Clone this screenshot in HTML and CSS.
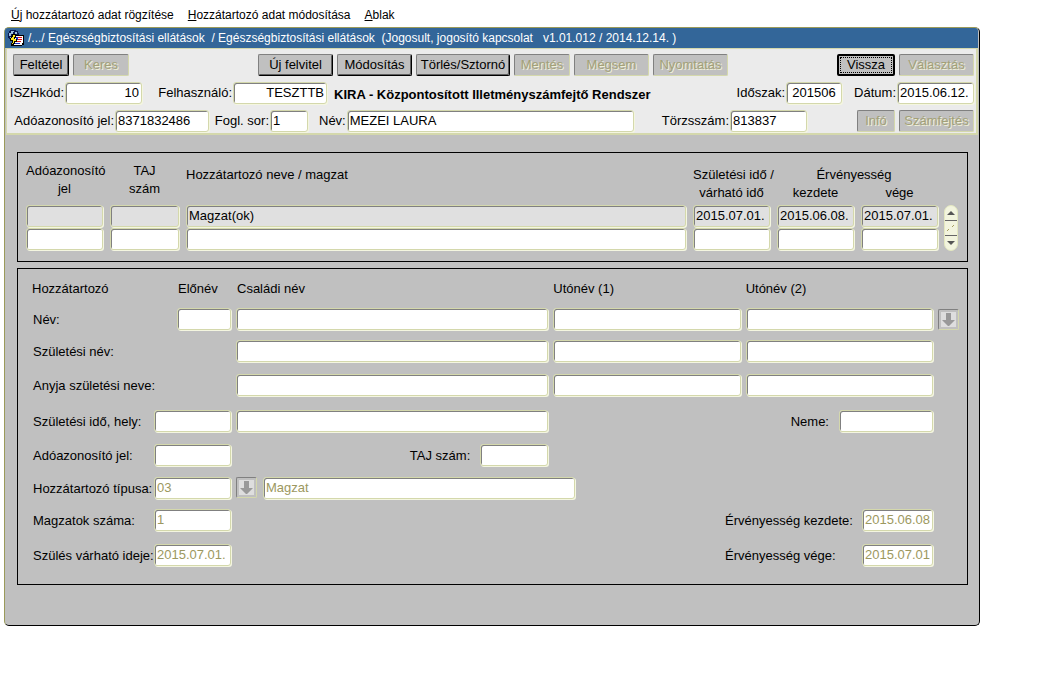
FILE: index.html
```html
<!DOCTYPE html>
<html lang="hu">
<head>
<meta charset="utf-8">
<title>KIRA - Központosított Illetményszámfejtő Rendszer</title>
<link rel="stylesheet" href="styles.css">
</head>
<body>
<nav class="menu">
  <button type="button" class="menu-item"><u>Ú</u>j hozzátartozó adat rögzítése</button>
  <button type="button" class="menu-item"><u>H</u>ozzátartozó adat módosítása</button>
  <button type="button" class="menu-item"><u>A</u>blak</button>
</nav>
<main class="window">
  <header class="titlebar">
    <svg class="app-icon" width="16" height="16" viewBox="0 0 16 16" shape-rendering="crispEdges" aria-hidden="true">
      <path fill="#0a1a50" d="M2 0h6v1h2v2h1v3H9v3H1V8H0V3h1V1h1z"/>
      <path fill="#9cc0e0" d="M3 1h3v1H5v2H3v2H1V3h2zM7 2h2v2H7zM2 7h3v1H2z"/>
      <path fill="#000" d="M5 5h11v10h-2v1H3v-3h2z"/>
      <path fill="#fff" d="M6 6h9v7h-1v2H4v-1h2z"/>
      <path fill="#e01818" d="M10 7h4v1h-4zM10 9h4v1h-4zM9 11h4v1H9z"/>
      <path fill="#1830c0" d="M8 7h2v3H8zM7 13h5v1H7z"/>
      <path fill="#000" d="M4 4h4v4H7v1h2v3H7v2H6v1H3v-2h1v-2H2V8h1V6h1z"/>
      <path fill="#ffe820" d="M5 5h2v2H6v2h2v2H6v2H5v1H4v-1h1v-3H3V8h1V7h1z"/>
    </svg>
    <span class="title">/.../ Egészségbiztosítási ellátások&nbsp; / Egészségbiztosítási ellátások&nbsp; (Jogosult, jogosító kapcsolat &nbsp; v1.01.012 / 2014.12.14. )</span>
  </header>

  <section class="toolbar">
    <div class="actions">
      <div class="group">
        <button type="button" class="btn w56">Feltétel</button>
        <button type="button" class="btn w56" disabled>Keres</button>
      </div>
      <div class="group group-main">
        <button type="button" class="btn w75">Új felvitel</button>
        <button type="button" class="btn w75">Módosítás</button>
        <button type="button" class="btn w94">Törlés/Sztornó</button>
        <button type="button" class="btn w56" disabled>Mentés</button>
        <button type="button" class="btn w75" disabled>Mégsem</button>
        <button type="button" class="btn w75" disabled>Nyomtatás</button>
      </div>
      <div class="group group-end">
        <button type="button" class="btn w56 current"><span>Vissza</span></button>
        <button type="button" class="btn w75" disabled>Választás</button>
      </div>
    </div>
    <div class="info info-session">
      <div class="field"><label for="iszh">ISZHkód:</label><input id="iszh" class="box w77 right" value="10"></div>
      <div class="field"><label for="user">Felhasználó:</label><input id="user" class="box w94 right" value="TESZTTB"></div>
      <h1 class="system">KIRA - Központosított Illetményszámfejtő Rendszer</h1>
      <div class="field"><label for="period">Időszak:</label><input id="period" class="box w56 center" value="201506"></div>
      <div class="field"><label for="date">Dátum:</label><input id="date" class="box w77" value="2015.06.12."></div>
    </div>
    <div class="info info-person">
      <div class="field"><label for="tax">Adóazonosító jel:</label><input id="tax" class="box w94" value="8371832486"></div>
      <div class="field"><label for="job">Fogl. sor:</label><input id="job" class="box w38" value="1"></div>
      <div class="field name-field"><label for="name">Név:</label><input id="name" class="box grow" value="MEZEI LAURA"></div>
      <div class="field"><label for="reg">Törzsszám:</label><input id="reg" class="box w77" value="813837"></div>
      <div class="group group-end">
        <button type="button" class="btn w38" disabled>Infó</button>
        <button type="button" class="btn w75" disabled>Számfejtés</button>
      </div>
    </div>
  </section>

  <section class="panel records">
    <table class="grid">
      <colgroup><col class="c-date"><col class="c-taj"><col><col class="c-date"><col class="c-date"><col class="c-last"></colgroup>
      <thead>
        <tr class="head-top">
          <th rowspan="2" class="top">Adóazonosító<br>jel</th>
          <th rowspan="2" class="top">TAJ<br>szám</th>
          <th rowspan="2" class="name-head">Hozzátartozó neve / magzat</th>
          <th rowspan="2">Születési idő /<br>várható idő</th>
          <th colspan="2">Érvényesség</th>
        </tr>
        <tr><th>kezdete</th><th class="last">vége</th></tr>
      </thead>
      <tbody>
        <tr class="selected">
          <td><input class="box" aria-label="Adóazonosító jel 1"></td>
          <td><input class="box" aria-label="TAJ szám 1"></td>
          <td><input class="box" aria-label="Hozzátartozó neve 1" value="Magzat(ok)"></td>
          <td><input class="box" aria-label="Születési idő 1" value="2015.07.01."></td>
          <td><input class="box" aria-label="Érvényesség kezdete 1" value="2015.06.08."></td>
          <td class="last"><input class="box" aria-label="Érvényesség vége 1" value="2015.07.01."></td>
        </tr>
        <tr>
          <td><input class="box" aria-label="Adóazonosító jel 2"></td>
          <td><input class="box" aria-label="TAJ szám 2"></td>
          <td><input class="box" aria-label="Hozzátartozó neve 2"></td>
          <td><input class="box" aria-label="Születési idő 2"></td>
          <td><input class="box" aria-label="Érvényesség kezdete 2"></td>
          <td class="last"><input class="box" aria-label="Érvényesség vége 2"></td>
        </tr>
      </tbody>
    </table>
    <div class="scroller">
      <button type="button" class="scroll-btn" aria-label="Fel"><svg width="8" height="4" viewBox="0 0 8 4"><path fill="#555" d="M4 0l4 4H0z"/></svg></button>
      <div class="thumb"><svg width="8" height="8" viewBox="0 0 8 8"><path stroke="#a8a060" d="M0 7l2-2M5 3l2-2"/></svg></div>
      <button type="button" class="scroll-btn" aria-label="Le"><svg width="8" height="4" viewBox="0 0 8 4"><path fill="#555" d="M0 0h8L4 4z"/></svg></button>
    </div>
  </section>

  <form class="panel details">
    <span>Hozzátartozó</span><span class="prefix head">Előnév</span><span class="head">Családi név</span><span>Utónév (1)</span><span>Utónév (2)</span>

    <label class="col1" for="n0">Név:</label>
    <input id="n0" class="box prefix">
    <input class="box" aria-label="Családi név">
    <input class="box" aria-label="Utónév 1">
    <input class="box" aria-label="Utónév 2">
    <button type="button" class="pick" aria-label="Név választása" disabled><svg width="15" height="15" viewBox="0 0 15 15"><path fill="#999" d="M5 1h5v7h4l-6 6H7L1 8h4z"/></svg></button>

    <label class="col1" for="b0">Születési név:</label>
    <input id="b0" class="box col3">
    <input class="box" aria-label="Születési utónév 1">
    <input class="box" aria-label="Születési utónév 2">

    <label class="col1" for="m0">Anyja születési neve:</label>
    <input id="m0" class="box col3">
    <input class="box" aria-label="Anyja utónév 1">
    <input class="box" aria-label="Anyja utónév 2">

    <label class="col1" for="bd">Születési idő, hely:</label>
    <input id="bd" class="box">
    <input class="box" aria-label="Születési hely">
    <div class="field spaced side"><label for="sex">Neme:</label><input id="sex" class="box w94"></div>

    <label class="col1" for="tx">Adóazonosító jel:</label>
    <input id="tx" class="box">
    <div class="field spaced"><label for="taj">TAJ szám:</label><input id="taj" class="box w68"></div>

    <label class="col1" for="type">Hozzátartozó típusa:</label>
    <input id="type" class="box" value="03" disabled>
    <div class="type-field">
      <button type="button" class="pick" aria-label="Típus választása" disabled><svg width="15" height="15" viewBox="0 0 15 15"><path fill="#999" d="M5 1h5v7h4l-6 6H7L1 8h4z"/></svg></button>
      <input class="box type-name" aria-label="Típus neve" value="Magzat" disabled>
    </div>

    <label class="col1" for="cnt">Magzatok száma:</label>
    <input id="cnt" class="box" value="1" disabled>
    <div class="field spaced side dates"><label for="from">Érvényesség kezdete:</label><input id="from" class="box w71" value="2015.06.08." disabled></div>

    <label class="col1" for="due">Szülés várható ideje:</label>
    <input id="due" class="box" value="2015.07.01." disabled>
    <div class="field spaced side dates"><label for="to">Érvényesség vége:</label><input id="to" class="box w71" value="2015.07.01" disabled></div>
  </form>
</main>
</body>
</html>
```

FILE: styles.css
```css
* { box-sizing: border-box; }

body {
  margin: 0;
  padding: 0 63px 0 4px;
  background: #fff;
  color: #000;
  font: 13px/18px "Liberation Sans", Arial, sans-serif;
}

button, input { font: inherit; color: inherit; margin: 0; }

.menu { display: flex; gap: 14px; padding: 6px 7px 3px; }
.menu-item { border: 0; padding: 0; background: none; font-size: 12px; white-space: nowrap; }

.window {
  background: #c0c0c0;
  border: 1px solid #000;
  border-top-color: #9a9a5a;
  border-left-color: #9a9a5a;
  border-radius: 5px;
  padding: 0 1px 34px 0;
}

.titlebar {
  display: flex;
  align-items: center;
  gap: 4px;
  height: 20px;
  padding-left: 3px;
  background: #336699;
  color: #fff;
  border-radius: 3px 3px 0 0;
  font-size: 12px;
  white-space: nowrap;
}
.app-icon { flex: none; }

.toolbar {
  margin: 0 0 17px 1px;
  padding: 5px 2px 1px 6px;
  background: #ebebeb;
  border: 1px solid #d4d8ac;
  border-width: 1px 2px 2px 1px;
}
.actions, .group { display: flex; gap: 4px; }
.group-main { margin-left: 125px; }
.group-end { margin-left: auto; }

.btn {
  flex: none;
  height: 22px;
  padding: 0;
  background: #c0c0c0;
  border: 1px solid;
  border-color: #808080 #000 #000 #808080;
  border-radius: 2px;
  box-shadow: inset -1px -1px #606060;
  text-align: center;
  line-height: 18px;
  white-space: nowrap;
}
.btn:disabled {
  border-color: #808080 #d4d8ac #d4d8ac #808080;
  box-shadow: none;
  color: #a3a078;
  text-shadow: 1px 1px #f0f0d8;
}
.btn.current { border: 2px solid #000; box-shadow: none; width: 58px; }
.current span { display: block; margin: 0 1px; border: 1px dotted #000; line-height: 14px; }

.w38 { width: 38px; }
.w56 { width: 56px; }
.w68 { width: 68px; }
.w71 { width: 71px; }
.w75 { width: 75px; }
.w77 { width: 77px; }
.w94 { width: 94px; }

.info { display: grid; align-items: center; margin-top: 6px; }
.info-session { grid-template-columns: 129px 185px 1fr 187px 132px; }
.info-person { grid-template-columns: 196px 99px 1fr 173px 167px; }
.field { display: flex; align-items: center; justify-content: flex-end; gap: 1px; white-space: nowrap; }
.spaced { gap: 10px; }
.system { margin: 4px 0 0 7px; font-size: 13px; line-height: 18px; white-space: nowrap; }
.name-field { padding-left: 11px; }

.box {
  width: 100%;
  min-width: 0;
  height: 22px;
  padding: 0 2px 1px;
  background: #fff;
  border: 1px solid #d4d8ac;
  border-radius: 3px;
  box-shadow: inset 1px 1px #808080, 1px 1px #f4f6e0;
}
.field .box { flex: none; }
.field .grow { flex: 1; }
.box.w38 { width: 38px; }
.box.w56 { width: 56px; }
.box.w68 { width: 68px; }
.box.w71 { width: 71px; }
.box.w77 { width: 77px; }
.box.w94 { width: 94px; }
.box:disabled { color: #9c9860; }
.right { text-align: right; }
.center { text-align: center; }

.panel { margin: 0 10px 6px 12px; border: 1px solid #000; }

.records { display: flex; align-items: flex-end; gap: 6px; padding: 9px 9px 10px 8px; }
.grid { flex: 1; width: 100%; min-width: 0; table-layout: fixed; border-collapse: collapse; }
.c-date { width: 84px; }
.c-taj { width: 76px; }
.c-last { width: 77px; }
.grid th { padding: 0 7px 0 0; font-weight: normal; vertical-align: bottom; white-space: nowrap; }
.head-top { height: 22px; }
.grid th.top { vertical-align: top; }
.grid th.name-head { padding-top: 4px; vertical-align: top; text-align: left; }
.grid td { height: 23px; padding: 0 7px 0 0; vertical-align: top; }
.grid td.last, .grid th.last { padding-right: 0; }
.grid .box { display: block; }
.selected .box { background: #e0e0e0; }
.grid .selected td { height: 26px; padding-top: 3px; }

.scroller {
  flex: none;
  display: flex;
  flex-direction: column;
  width: 14px;
  height: 46px;
  background: #f2f4de;
  border: 1px solid #e4e8c0;
  border-radius: 7px;
}
.scroll-btn { display: grid; place-items: center; height: 14px; padding: 0; border: 0; background: none; }
.thumb { flex: 1; display: grid; place-items: center; border: solid #666; border-width: 1px 0; }

.details {
  display: grid;
  grid-template-columns: 117px 77px 5fr 3fr 3fr 21px;
  grid-template-rows: 28px 33px 32px 36px 36px 32px 34px 29px 42px;
  column-gap: 5px;
  align-items: center;
  padding: 6px 8px 7px 14px;
  white-space: nowrap;
}
.details .prefix { width: 54px; justify-self: end; }
.details .head { padding-left: 1px; }
.details .box { margin-bottom: 2px; }
.details label.col1 { padding-left: 1px; }
.col1 { grid-column: 1; }
.col3 { grid-column: 3; }
.side { grid-column: 4 / 6; }
.dates label { width: 127px; }
.type-field { grid-column: 3 / 5; display: flex; gap: 6px; }
.type-name { flex: 0 1 312px; }
.pick {
  flex: none;
  display: grid;
  place-items: center;
  width: 21px;
  height: 21px;
  padding: 0;
  background: #c0c0c0;
  border: 1px solid;
  border-color: #808080 #d4d8ac #d4d8ac #808080;
  border-radius: 2px;
}
.pick svg { background: #dedede; }
```
